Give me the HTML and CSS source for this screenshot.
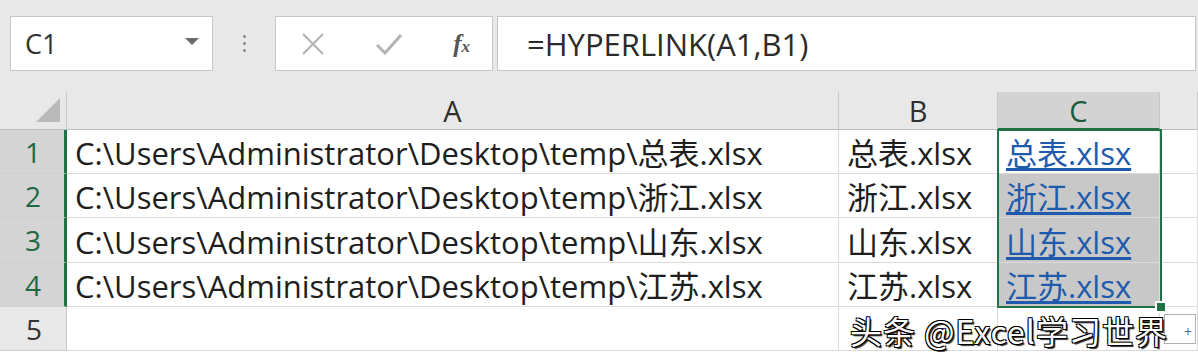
FILE: index.html
```html
<!DOCTYPE html>
<html lang="zh">
<head>
    <meta charset="UTF-8">
    <title>HYPERLINK</title>
    <link rel="stylesheet" href="styles.css">
</head>
<body>
    <div class="formula-bar">
        <div class="name-box">
            <span>C1</span>
            <svg class="drop" width="14" height="8" viewBox="0 0 14 8"><path d="M0 0H14L7 7Z" fill="#6b6b6b"/></svg>
        </div>
        <div class="grip"><i></i><i></i><i></i></div>
        <div class="fx-box">
            <svg width="24" height="24" viewBox="0 0 24 24"><path d="M2 2L22 22M22 2L2 22" stroke="#b4b4b4" stroke-width="2.2" fill="none"/></svg>
            <svg width="26" height="22" viewBox="0 0 26 22"><path d="M1 12L9 20L25 2" stroke="#b4b4b4" stroke-width="3" fill="none"/></svg>
            <span class="fx">f<small>x</small></span>
        </div>
        <div class="formula">=HYPERLINK(A1,B1)</div>
    </div>

    <div class="sheet">
        <div class="corner"><svg width="24" height="24" viewBox="0 0 24 24"><path d="M24 0V24H0Z" fill="#b9b9b9"/></svg></div>
        <div class="col-head">A</div>
        <div class="col-head">B</div>
        <div class="col-head sel">C</div>
        <div class="col-head"></div>

        <div class="row-head sel">1</div>
        <div class="cell">C:\Users\Administrator\Desktop\temp\总表.xlsx</div>
        <div class="cell">总表.xlsx</div>
        <div class="cell"><a href="#">总表.xlsx</a></div>
        <div class="cell"></div>

        <div class="row-head sel">2</div>
        <div class="cell">C:\Users\Administrator\Desktop\temp\浙江.xlsx</div>
        <div class="cell">浙江.xlsx</div>
        <div class="cell shade"><a href="#">浙江.xlsx</a></div>
        <div class="cell"></div>

        <div class="row-head sel">3</div>
        <div class="cell">C:\Users\Administrator\Desktop\temp\山东.xlsx</div>
        <div class="cell">山东.xlsx</div>
        <div class="cell shade"><a href="#">山东.xlsx</a></div>
        <div class="cell"></div>

        <div class="row-head sel">4</div>
        <div class="cell">C:\Users\Administrator\Desktop\temp\江苏.xlsx</div>
        <div class="cell">江苏.xlsx</div>
        <div class="cell shade"><a href="#">江苏.xlsx</a></div>
        <div class="cell"></div>

        <div class="row-head">5</div>
        <div class="cell"></div>
        <div class="cell"></div>
        <div class="cell"></div>
        <div class="cell"></div>

        <div class="selection"><i class="handle"></i></div>
        <div class="quick"><span>+</span></div>
        <div class="watermark">头条 @Excel学习世界</div>
    </div>
</body>
</html>
```

FILE: styles.css
```css
body { margin: 0; width: 1198px; height: 352px; overflow: hidden; background: #fff; font-family: "Open Sans", "Noto Sans CJK SC", sans-serif; color: #1e1e1e; }

.formula-bar { height: 92px; background: #e8e8e8; display: flex; align-items: flex-start; padding-top: 16px; box-sizing: border-box; }
.name-box { margin-left: 10px; width: 203px; height: 55px; box-sizing: border-box; background: #fff; border: 1px solid #c6c6c6; display: flex; align-items: center; justify-content: space-between; padding: 0 13px 0 14px; font-size: 27px; color: #333; }
.name-box .drop { margin-top: -4px; }
.grip { width: 62px; height: 55px; display: flex; flex-direction: column; align-items: center; justify-content: center; gap: 4px; }
.grip i { width: 3px; height: 3px; border-radius: 50%; background: #8a8a8a; }
.fx-box { width: 218px; height: 55px; box-sizing: border-box; background: #fff; border: 1px solid #c6c6c6; display: flex; align-items: center; justify-content: space-between; padding: 0 22px 0 25px; }
.fx { font-family: "Liberation Serif", serif; font-style: italic; font-weight: bold; font-size: 25px; color: #555; }
.fx small { font-size: 17px; }
.formula { flex: 1; margin: 0 2px 0 4px; height: 55px; box-sizing: border-box; background: #fff; border: 1px solid #c6c6c6; display: flex; align-items: center; padding-left: 29px; font-size: 31px; color: #2b2b2b; }

.sheet { position: relative; display: grid; grid-template-columns: 67px 772px 159px 162px 38px; grid-template-rows: 38px 44px 44px 45px 44px 44px; }
.corner { background: #e8e8e8; border-right: 1px solid #c8c8c8; border-bottom: 1px solid #bdbdbd; display: flex; align-items: flex-end; justify-content: flex-end; padding: 0 6px 7px 0; box-sizing: border-box; }
.col-head { background: #e8e8e8; border-right: 1px solid #c8c8c8; border-bottom: 1px solid #bdbdbd; display: flex; align-items: center; justify-content: center; font-size: 29px; color: #2f2f2f; box-sizing: border-box; }
.col-head.sel { background: #d3d3d3; color: #1d5b3c; border-bottom: 2px solid #217346; }
.row-head { background: #e8e8e8; border-right: 1px solid #c8c8c8; border-bottom: 1px solid #cfcfcf; display: flex; align-items: center; justify-content: center; font-size: 28px; color: #333; box-sizing: border-box; padding-left: 2px; }
.row-head.sel { background: #d4d4d4; color: #1d6a45; border-right: 3px solid #217346; }
.cell { border-right: 1px solid #dadada; border-bottom: 1px solid #dadada; display: flex; align-items: center; padding-left: 8px; font-size: 31px; white-space: nowrap; box-sizing: border-box; }
.cell.shade { background: #c8c8c8; }
.cell a { color: #1f5bac; text-decoration: underline; text-underline-offset: 3px; }

.selection { position: absolute; left: 997px; top: 37px; width: 165px; height: 179px; border: 2px solid #217346; box-sizing: border-box; }
.handle { position: absolute; right: -7px; bottom: -7px; width: 8px; height: 8px; background: #217346; border: 2px solid #fff; }
.quick { position: absolute; left: 1164px; top: 222px; width: 32px; height: 30px; border: 1px solid #b0b0b0; background: #fff; font-size: 14px; color: #666; display: flex; align-items: flex-end; justify-content: flex-end; padding: 0 3px 2px 0; box-sizing: border-box; }
.watermark { position: absolute; left: 850px; top: 222px; line-height: 1; font-family: "Noto Sans CJK SC", sans-serif; font-size: 32px; letter-spacing: 1px; color: #fff; white-space: nowrap; text-shadow: 1px 1px 0 #000, -1px -1px 0 #000, 1px -1px 0 #000, -1px 1px 0 #000, 2px 2px 1px #333; }
```
